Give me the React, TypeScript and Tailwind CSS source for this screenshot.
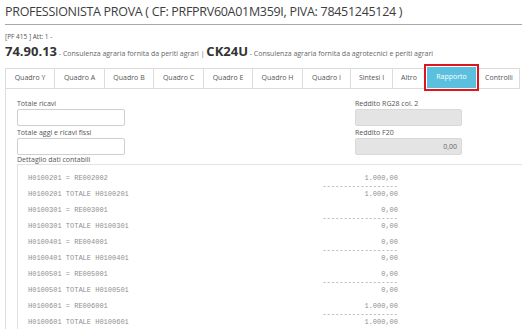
const tabs = [
  { label: 'Quadro Y', w: 'w-[49px]' },
  { label: 'Quadro A', w: 'w-[50px]' },
  { label: 'Quadro B', w: 'w-[49px]' },
  { label: 'Quadro C', w: 'w-[50px]' },
  { label: 'Quadro E', w: 'w-[49px]' },
  { label: 'Quadro H', w: 'w-[50px]' },
  { label: 'Quadro I', w: 'w-[48px]' },
  { label: 'Sintesi I', w: 'w-[42px]' },
  { label: 'Altro', w: 'w-[33px]' },
  { label: 'Rapporto', w: 'w-[53px]', active: true },
  { label: 'Controlli', w: 'w-[42px]' },
]

const rows = [
  { code: 'H0100201', re: 'RE002002', value: '1.000,00' },
  { code: 'H0100301', re: 'RE003001', value: '0,00' },
  { code: 'H0100401', re: 'RE004001', value: '0,00' },
  { code: 'H0100501', re: 'RE005001', value: '0,00' },
  { code: 'H0100601', re: 'RE006001', value: '1.000,00' },
]

function Field({ label, value, disabled }: { label: string; value?: string; disabled?: boolean }) {
  return (
    <div>
      <div className="text-[7px] leading-[9px] text-[#555] pt-[1px]">{label}</div>
      <div
        className={
          disabled
            ? 'h-[17px] mt-[1px] border border-[#d9d9d9] bg-[#e4e4e4] rounded-[2px] text-right pr-[4px] text-[7px] leading-[15px] text-[#666]'
            : 'h-[17px] mt-[1px] border border-[#cfcfcf] bg-white rounded-[2px]'
        }
      >
        {value}
      </div>
    </div>
  )
}

export default function App() {
  return (
    <div className="w-[527px] h-[335px] overflow-hidden bg-white font-['Open_Sans',sans-serif] text-[#333]">
      <div className="pl-[5px] pr-[5px]">
        <h1 className="pt-[3px] pb-[4px] text-[12.5px] leading-[17px] tracking-[-0.3px] font-normal text-[#3d3d3d] border-b border-[#a8a8a8] whitespace-nowrap">
          PROFESSIONISTA PROVA ( CF: PRFPRV60A01M359I, PIVA: 78451245124 )
        </h1>
        <div className="mt-[7px] text-[6.5px] leading-[9px] text-[#555]">[PF 415 ] Att: 1 -</div>
        <div className="mt-[3px] flex items-baseline whitespace-nowrap leading-[15px]">
          <span className="text-[13px] font-bold text-[#333]">74.90.13</span>
          <span className="text-[7px] text-[#666]">&nbsp;- Consulenza agraria fornita da periti agrari |&nbsp;</span>
          <span className="text-[13px] font-bold text-[#333]">CK24U</span>
          <span className="text-[7px] text-[#666]">&nbsp;- Consulenza agraria fornita da agrotecnici e periti agrari</span>
        </div>

        <div className="mt-[7px] flex h-[21px]">
          {tabs.map((t) =>
            t.active ? (
              <div key={t.label} className={`${t.w} relative`}>
                <div className="absolute left-[-1px] right-[-1px] top-[-4px] bottom-[-2px] border-2 border-[#e0141c] p-[1px] bg-white">
                  <div className="h-full bg-[#5bc0de] flex items-center justify-center text-[7px] text-white">
                    {t.label}
                  </div>
                </div>
              </div>
            ) : (
              <div
                key={t.label}
                className={`${t.w} border border-r-0 border-[#dcdcdc] flex items-center justify-center text-[7px] text-[#555] last:border-r`}
              >
                {t.label}
              </div>
            ),
          )}
        </div>

        <div className="h-[240px] border-l border-[#dedede] pl-[11px] pt-[9px] overflow-hidden">
          <div className="flex">
            <div className="w-[108px] flex flex-col gap-[1px]">
              <Field label="Totale ricavi" />
              <Field label="Totale aggi e ricavi fissi" />
            </div>
            <div className="ml-[230px] w-[107px] flex flex-col gap-[1px]">
              <Field label="Reddito RG28 col. 2" disabled />
              <Field label="Reddito F20" value="0,00" disabled />
            </div>
          </div>
          <div className="text-[7px] leading-[9px] text-[#555]">Dettaglio dati contabili</div>
          <div className="h-[200px] border-l border-t border-[#e2e2e2] mr-[-20px] pl-[10px] pt-[9px] font-['Liberation_Mono',monospace] text-[7px] leading-[8px] text-[#8f8f8f] whitespace-pre">
            {rows.map((r) => (
              <div key={r.code} className="w-[370px] pb-[8px]">
                <div className="flex justify-between">
                  <span>{`${r.code} = ${r.re}`}</span>
                  <span>{r.value}</span>
                </div>
                <div className="text-right">------------------</div>
                <div className="flex justify-between">
                  <span>{`${r.code} TOTALE ${r.code}`}</span>
                  <span>{r.value}</span>
                </div>
              </div>
            ))}
          </div>
        </div>
      </div>
    </div>
  )
}
